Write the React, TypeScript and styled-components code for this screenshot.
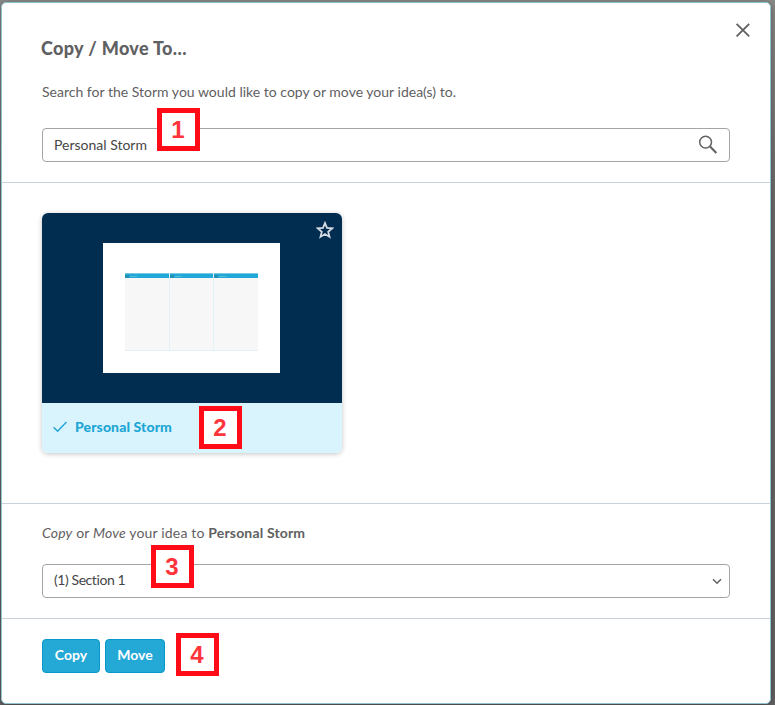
import React from "react";
import styled, { createGlobalStyle } from "styled-components";

const GlobalStyle = createGlobalStyle`
  *, *::before, *::after { box-sizing: border-box; }
  html, body, #root { height: 100%; }
  body {
    margin: 0;
    overflow: hidden;
    background: linear-gradient(180deg, #8b8b8a 0%, #6e6e6e 30%, #666 100%);
    color: #5f6062;
    font-family: Lato, "Open Sans", sans-serif;
    font-size: 14px;
    line-height: 20px;
  }
`;

const Backdrop = styled.div`
  height: 705px;
  padding: 2px 4px 1px 1px;
`;

const Dialog = styled.main`
  height: 702px;
  display: flex;
  flex-direction: column;
  background: #fff;
  border: 1px solid #8fc3d0;
  border-radius: 5px;
  box-shadow: 0 2px 8px rgba(0, 0, 0, 0.4);
`;

const Section = styled.section<{ $height: number; $top: number }>`
  position: relative;
  flex: none;
  height: ${(p) => p.$height}px;
  padding: ${(p) => p.$top}px 40px 0;
  border-bottom: 1px solid #c9d2da;
`;

const Footer = styled.footer`
  position: relative;
  display: flex;
  gap: 5px;
  padding: 20px 40px 0;
`;

const Title = styled.h1`
  margin: 0 0 0 -1px;
  font-size: 18px;
  line-height: 24px;
  font-weight: 900;
  letter-spacing: 0.35px;
`;

const CloseButton = styled.button`
  position: absolute;
  top: 20px;
  right: 20px;
  width: 15px;
  height: 15px;
  padding: 0;
  border: 0;
  background: none;
  svg { display: block; }
`;

const Hint = styled.p<{ $top: number; $spacing: number }>`
  margin: ${(p) => p.$top}px 0 0;
  letter-spacing: ${(p) => p.$spacing}px;
  white-space: nowrap;
`;

const Field = styled.div<{ $top: number; $right: number }>`
  display: flex;
  align-items: center;
  justify-content: space-between;
  width: 688px;
  height: 34px;
  margin-top: ${(p) => p.$top}px;
  padding: 0 ${(p) => p.$right}px 0 11px;
  border: 1px solid #a5a5a5;
  border-radius: 4px;
  color: #464646;
`;

const Value = styled.span<{ $spacing: number; $lift?: number }>`
  letter-spacing: ${(p) => p.$spacing}px;
  padding-bottom: ${(p) => p.$lift ?? 0}px;
`;

const Card = styled.article`
  position: relative;
  width: 300px;
  height: 240px;
  border-radius: 6px;
  overflow: hidden;
  background: #daf4fe;
`;

const CardShadow = styled.div`
  width: 300px;
  border-radius: 6px;
  box-shadow: 0 1px 5px rgba(0, 0, 0, 0.24);
`;

const Preview = styled.div`
  height: 190px;
  padding-top: 30px;
  padding-left: 61px;
  background: #012d50;
`;

const Canvas = styled.div`
  width: 177px;
  height: 130px;
  padding: 30px 22px 22px;
  background: #fff;
`;

const Board = styled.div`
  display: grid;
  grid-template-columns: 44px 43px 44px;
  gap: 1px;
  width: 133px;
  height: 78px;
  background: #e2f1f5;
  border-bottom: 1px solid #e2f1f5;
`;

const Column = styled.div`
  background: #f7f7f7;
`;

const ColumnHead = styled.div`
  display: flex;
  align-items: center;
  gap: 1px;
  height: 5px;
  background: #20a9d8;
  border-top: 1px solid #79c8df;
  &::before { content: ""; width: 4px; height: 3px; background: #2490b4; }
  &::after { content: ""; width: 7px; height: 1px; background: #5bb9d8; }
`;

const CardLabel = styled.div`
  display: flex;
  align-items: center;
  height: 50px;
  padding: 0 0 2px 11px;
  gap: 8px;
  color: #20a6d4;
  font-weight: 900;
  letter-spacing: 0.12px;
`;

const Star = styled.svg`
  position: absolute;
  top: 8px;
  right: 8px;
`;

const Button = styled.button<{ $width: number }>`
  width: ${(p) => p.$width}px;
  height: 34px;
  padding: 0 0 2px;
  border: 1px solid #0699c9;
  border-radius: 4px;
  background: #24a8d6;
  color: #fff;
  font: 700 14px/20px Lato, sans-serif;
`;

const Marker = styled.span<{ $x: number; $y: number }>`
  position: absolute;
  left: ${(p) => p.$x}px;
  top: ${(p) => p.$y}px;
  width: 43px;
  height: 43px;
  display: flex;
  align-items: center;
  justify-content: center;
  padding-right: 1px;
  border: 5px solid #ff0c18;
  background: #fff;
  color: #ff343b;
  font: 700 24px/33px "Liberation Sans", Arial, sans-serif;
`;

export default function App() {
  return (
    <>
      <GlobalStyle />
      <Backdrop>
        <Dialog>
          <Section $height={180} $top={33}>
            <Title>Copy / Move To...</Title>
            <CloseButton aria-label="Close">
              <svg width="15" height="15" viewBox="0 0 15 15" fill="none" stroke="#606060" strokeWidth="1.8">
                <path d="M1.6 .8 14.2 13.4M14.2 .8 1.6 13.4" />
              </svg>
            </CloseButton>
            <Hint $top={22} $spacing={0.01}>Search for the Storm you would like to copy or move your idea(s) to.</Hint>
            <Field $top={26} $right={11}>
              <Value $spacing={0}>Personal Storm</Value>
              <svg width="20" height="20" viewBox="0 0 20 20" fill="none" stroke="#626262">
                <circle cx="7.6" cy="7.1" r="5.9" strokeWidth="1.5" />
                <path d="m12 11.5 6.4 6.4" strokeWidth="2.1" />
              </svg>
            </Field>
            <Marker $x={155} $y={105}>1</Marker>
          </Section>
          <Section $height={321} $top={30}>
            <CardShadow>
              <Card>
                <Preview>
                  <Canvas>
                    <Board>
                      <Column><ColumnHead /></Column>
                      <Column><ColumnHead /></Column>
                      <Column><ColumnHead /></Column>
                    </Board>
                  </Canvas>
                </Preview>
                <Star width="18" height="18" viewBox="0 0 18 18" fill="none" stroke="#d5dae2" strokeWidth="1.8">
                  <path d="m9 2 2 4.9 5.2.4-4 3.4 1.3 5.2L9 13.1l-4.5 2.8 1.3-5.2-4-3.4L7 6.9Z" />
                </Star>
                <CardLabel>
                  <svg width="14" height="12" viewBox="0 0 14 12" fill="none" stroke="currentColor" strokeWidth="1.5">
                    <path d="m.6 6.3 4 4L13.5 1" />
                  </svg>
                  <span>Personal Storm</span>
                </CardLabel>
              </Card>
            </CardShadow>
            <Marker $x={197} $y={223}>2</Marker>
          </Section>
          <Section $height={115} $top={19}>
            <Hint $top={0} $spacing={0.17}><em>Copy</em> or <em>Move</em> your idea to <b>Personal Storm</b></Hint>
            <Field $top={21} $right={7}>
              <Value $spacing={-0.42} $lift={2}>(1) Section 1</Value>
              <svg width="10" height="7" viewBox="0 0 10 7" fill="none" stroke="#606060" strokeWidth="1.5">
                <path d="m1 1.2 4 4 4-4" />
              </svg>
            </Field>
            <Marker $x={149} $y={41}>3</Marker>
          </Section>
          <Footer>
            <Button $width={58}>Copy</Button>
            <Button $width={60}>Move</Button>
            <Marker $x={174} $y={14}>4</Marker>
          </Footer>
        </Dialog>
      </Backdrop>
    </>
  );
}
